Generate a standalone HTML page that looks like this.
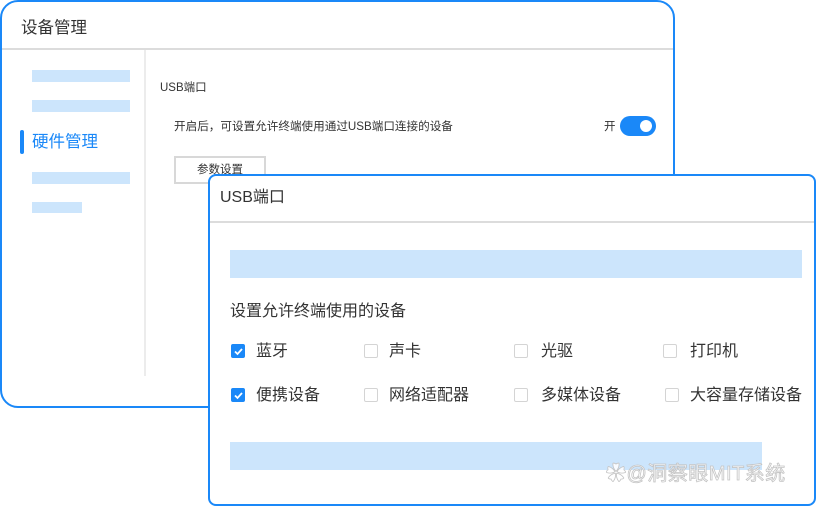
<html><head><style>
body{margin:0;width:816px;height:506px;background:#fff;position:relative;overflow:hidden;font-family:"Liberation Sans","Noto Sans CJK SC",sans-serif;color:#333}
.a{position:absolute}
.ph{position:absolute;background:#cce5fc}
.cb{position:absolute;width:12px;height:12px;border:1.5px solid #d4d4d4;border-radius:2px;background:#fff}
.cb.on{background:#1a88f8;border-color:#1a88f8}
.t{position:absolute;font-size:16px;line-height:16px;color:#333;white-space:nowrap}
</style></head><body>
<div class="a" style="left:0;top:0;width:671px;height:404px;border:2px solid #1a88f8;border-radius:18px;background:#fff"></div>
<div class="a" style="left:2px;top:48px;width:671px;height:2px;background:#dcdcdc"></div>
<div class="a" style="left:144px;top:50px;width:2px;height:326px;background:#ececec"></div>
<div class="a" style="left:21px;top:19px;font-size:16.5px;line-height:18px;color:#333">设备管理</div>
<div class="ph" style="left:32px;top:70px;width:98px;height:12px"></div>
<div class="ph" style="left:32px;top:100px;width:98px;height:12px"></div>
<div class="a" style="left:20px;top:130px;width:4px;height:24px;border-radius:2px;background:#1a88f8"></div>
<div class="a" style="left:32px;top:133px;font-size:16.5px;line-height:18px;color:#1a88f8">硬件管理</div>
<div class="ph" style="left:32px;top:172px;width:98px;height:12px"></div>
<div class="ph" style="left:32px;top:202px;width:50px;height:11px"></div>
<div class="a" style="left:160px;top:79px;font-size:11.5px;color:#333">USB端口</div>
<div class="a" style="left:174px;top:118px;font-size:11.6px;color:#333;white-space:nowrap">开启后，可设置允许终端使用通过USB端口连接的设备</div>
<div class="a" style="left:604px;top:118px;font-size:11.5px;color:#333">开</div>
<div class="a" style="left:620px;top:116px;width:36px;height:20px;border-radius:10px;background:#1a88f8"></div>
<div class="a" style="left:640px;top:120px;width:12px;height:12px;border-radius:6px;background:#fff"></div>
<div class="a" style="left:174px;top:156px;width:88px;height:24px;border:2px solid #d8d8d8;background:#fff;font-size:11.5px;line-height:24px;text-align:center;color:#333">参数设置</div>

<div class="a" style="left:208px;top:174px;width:604px;height:328px;border:2px solid #1a88f8;border-radius:8px;background:#fff"></div>
<div class="a" style="left:210px;top:221px;width:604px;height:2px;background:#dcdcdc"></div>
<div class="a" style="left:220px;top:189px;font-size:16px;line-height:18px;color:#333">USB端口</div>
<div class="ph" style="left:230px;top:250px;width:572px;height:28px"></div>
<div class="t" style="left:230px;top:304px">设置允许终端使用的设备</div>

<div class="cb on" style="left:231px;top:344px"></div><svg class="a" style="left:233px;top:346px" width="11" height="11"><path d="M2 5.5 L4.5 8 L9 3" stroke="#fff" stroke-width="1.8" fill="none"/></svg>
<div class="t" style="left:256px;top:344px">蓝牙</div>
<div class="cb" style="left:364px;top:344px"></div><div class="t" style="left:389px;top:344px">声卡</div>
<div class="cb" style="left:514px;top:344px"></div><div class="t" style="left:541px;top:344px">光驱</div>
<div class="cb" style="left:663px;top:344px"></div><div class="t" style="left:690px;top:344px">打印机</div>

<div class="cb on" style="left:231px;top:388px"></div><svg class="a" style="left:233px;top:390px" width="11" height="11"><path d="M2 5.5 L4.5 8 L9 3" stroke="#fff" stroke-width="1.8" fill="none"/></svg>
<div class="t" style="left:256px;top:388px">便携设备</div>
<div class="cb" style="left:364px;top:388px"></div><div class="t" style="left:389px;top:388px">网络适配器</div>
<div class="cb" style="left:514px;top:388px"></div><div class="t" style="left:541px;top:388px">多媒体设备</div>
<div class="cb" style="left:665px;top:388px"></div><div class="t" style="left:690px;top:388px">大容量存储设备</div>

<div class="ph" style="left:230px;top:442px;width:532px;height:28px"></div>
<div class="a" style="left:606px;top:463px;font-size:20px;line-height:22px;letter-spacing:0.5px;color:rgba(255,255,255,0.85);-webkit-text-stroke:0.8px #c4c4c4;white-space:nowrap">✿@洞察眼MIT系统</div>
</body></html>
